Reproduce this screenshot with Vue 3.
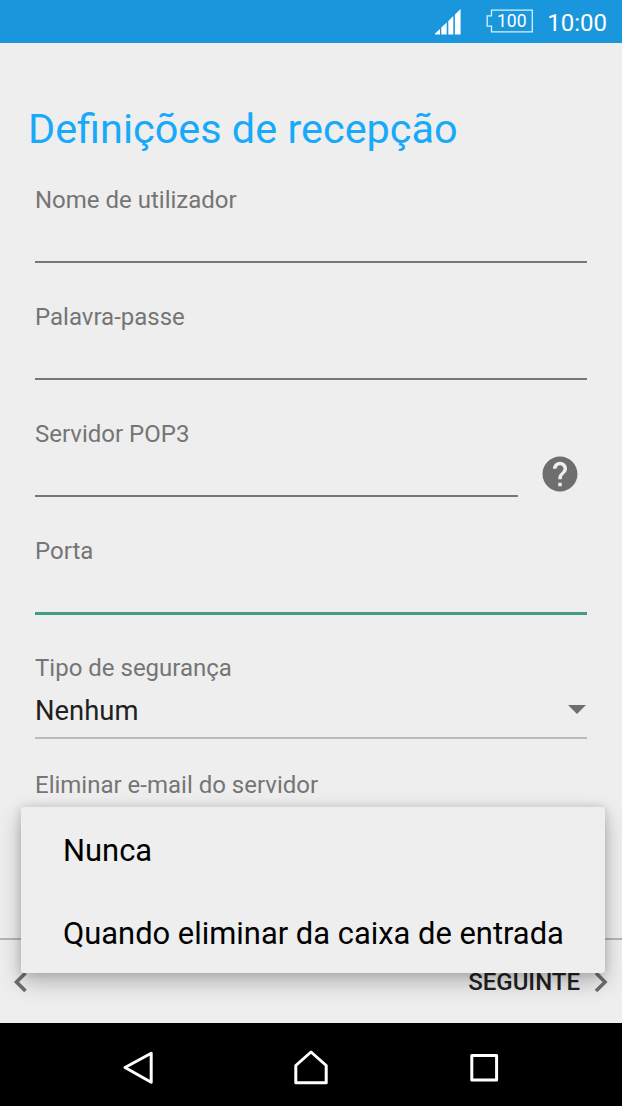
<template>
  <div class="screen">
    <!-- STATUS BAR -->
    <header class="status-bar">
      <svg class="signal" width="26" height="26" viewBox="0 0 26 26">
        <path d="M0 25.5V24.6L5 20v5.5zM6.3 25.5V18.5L11.7 13.4v12.1zM13.3 25.5V11.9L18.3 7v18.5zM19.9 25.5V5.5L25.6 0v25.5z" />
      </svg>
      <div class="battery">
        <svg width="48" height="24" viewBox="0 0 48 24">
          <path d="M5.5 1.2H46.3V22.8H5.5V17.2H1.2V6.8H5.5z" />
        </svg>
        <span>100</span>
      </div>
      <span class="clock">10:00</span>
    </header>

    <!-- FORM -->
    <main class="content">
      <h1>Definições de recepção</h1>

      <div v-for="field in fields" :key="field.id" class="field">
        <label :for="field.id">{{ field.label }}</label>
        <div class="field-row">
          <input
            :id="field.id"
            v-model="field.value"
            :type="field.type"
            :class="{ active: field.active }"
          />
          <button v-if="field.help" class="help" aria-label="Ajuda">
            <svg width="42" height="42" viewBox="0 0 24 24">
              <path d="M12 2C6.48 2 2 6.48 2 12s4.48 10 10 10 10-4.48 10-10S17.52 2 12 2zm1 17h-2v-2h2v2zm2.07-7.75l-.9.92C13.45 12.9 13 13.5 13 15h-2v-.5c0-1.1.45-2.1 1.17-2.83l1.24-1.26c.37-.36.59-.86.59-1.41 0-1.1-.9-2-2-2s-2 .9-2 2H8c0-2.21 1.79-4 4-4s4 1.79 4 4c0 .88-.36 1.68-.93 2.25z" />
            </svg>
          </button>
        </div>
      </div>

      <div class="field">
        <label>Tipo de segurança</label>
        <div class="spinner">
          <span>{{ security }}</span>
          <i class="caret"></i>
        </div>
      </div>

      <div class="field">
        <label>Eliminar e-mail do servidor</label>
      </div>
    </main>

    <!-- BOTTOM BAR -->
    <footer class="bottom-bar">
      <button aria-label="Anterior">
        <svg width="14" height="22" viewBox="0 0 14 22">
          <path d="M12.5 2L3.5 11l9 9" />
        </svg>
      </button>
      <button class="next">
        Seguinte
        <svg width="14" height="22" viewBox="0 0 14 22">
          <path d="M2 2l9 9-9 9" />
        </svg>
      </button>
    </footer>

    <!-- DROPDOWN -->
    <ul class="dropdown">
      <li v-for="option in options" :key="option">{{ option }}</li>
    </ul>

    <!-- NAVIGATION -->
    <nav class="nav-bar">
      <svg width="36" height="36" viewBox="0 0 36 36">
        <path d="M31.2 4.3V33.2L5 18.5z" />
      </svg>
      <svg width="36" height="36" viewBox="0 0 36 36">
        <path d="M18 3L33.2 16.5V33.7H2.8V16.5z" />
      </svg>
      <svg width="36" height="36" viewBox="0 0 36 36">
        <path d="M5.8 6.5h24.8v24.6H5.8z" />
      </svg>
    </nav>
  </div>
</template>

<script setup>
import { ref } from "vue";

const fields = ref([
  { id: "user", label: "Nome de utilizador", type: "text", value: "" },
  { id: "password", label: "Palavra-passe", type: "password", value: "" },
  { id: "server", label: "Servidor POP3", type: "text", value: "", help: true },
  { id: "port", label: "Porta", type: "text", value: "", active: true },
]);

const security = ref("Nenhum");

const options = ["Nunca", "Quando eliminar da caixa de entrada"];
</script>

<style>
body {
  margin: 0;
  background: #eee;
}
</style>

<style scoped>
.screen {
  position: relative;
  display: flex;
  flex-direction: column;
  width: 622px;
  height: 1106px;
  overflow: hidden;
  background: #eee;
  color: #212121;
  font-family: Roboto, sans-serif;
}

button {
  padding: 0;
  border: 0;
  background: none;
  font: inherit;
  color: inherit;
}

svg {
  display: block;
}

/* STATUS BAR */
.status-bar {
  display: flex;
  align-items: center;
  justify-content: flex-end;
  height: 43px;
  padding-right: 15px;
  box-sizing: border-box;
  background: #1a96dc;
  color: #fff;
}

.signal {
  margin: 1px 25px 0 0;
  fill: #fff;
}

.battery {
  display: grid;
  align-items: center;
  margin: 0 13px 1px 0;
}

.battery svg,
.battery span {
  grid-area: 1 / 1;
}

.battery svg {
  fill: none;
  stroke: #d3f3f8;
  stroke-width: 1.3;
}

.battery span {
  padding-left: 3px;
  font-size: 17.5px;
  line-height: 24px;
  text-align: center;
}

.clock {
  padding-top: 2px;
  font-size: 24px;
  line-height: 28px;
}

/* FORM */
.content {
  flex: 1;
  min-height: 0;
  overflow: hidden;
  padding: 61px 35px 0;
}

h1 {
  margin: 0 0 32px -7px;
  font-size: 41.4px;
  font-weight: 400;
  line-height: 50px;
  color: #18aaf9;
  white-space: nowrap;
}

.field {
  height: 117px;
}

.field label {
  display: block;
  font-size: 24px;
  line-height: 28px;
  color: #757575;
}

.field-row {
  display: flex;
}

input {
  flex: 1;
  min-width: 0;
  height: 49px;
  padding: 0;
  box-sizing: border-box;
  border: 0;
  border-bottom: 2px solid #777;
  border-radius: 0;
  outline: 0;
  background: none;
  font: 28px Roboto, sans-serif;
}

input.active {
  height: 50px;
  border-bottom: 3px solid #429a88;
}

.help {
  margin: 5px 6px 0 21px;
  height: 42px;
}

.help svg {
  fill: #6e6e6e;
}

.spinner {
  display: flex;
  align-items: center;
  justify-content: space-between;
  height: 57px;
  padding-right: 1px;
  box-sizing: border-box;
  border-bottom: 2px solid #bbb;
  font-size: 27.4px;
}

.spinner span {
  padding-top: 3px;
}

.caret {
  border: 9px solid transparent;
  border-top-color: #6e6e6e;
  border-bottom: 0;
}

/* BOTTOM BAR */
.bottom-bar {
  display: flex;
  align-items: center;
  justify-content: space-between;
  height: 85px;
  padding: 0 14px 0 13px;
  box-sizing: border-box;
  border-top: 2px solid #b5b5b5;
}

.bottom-bar svg {
  fill: none;
  stroke: #6e6e6e;
  stroke-width: 3.6;
}

.next {
  display: flex;
  align-items: center;
  gap: 14px;
  font-size: 24px;
  font-weight: 500;
  text-transform: uppercase;
}

/* DROPDOWN */
.dropdown {
  position: absolute;
  top: 807px;
  left: 21px;
  width: 584px;
  height: 166px;
  margin: 0;
  padding: 2px 0 0;
  box-sizing: border-box;
  list-style: none;
  border-radius: 3px;
  background: #eee;
  box-shadow: 0 9px 22px rgba(0, 0, 0, 0.26), 0 0 10px rgba(0, 0, 0, 0.14);
}

.dropdown li {
  padding-left: 42px;
  font-size: 30.9px;
  line-height: 83px;
  color: #000;
  white-space: nowrap;
}

/* NAVIGATION */
.nav-bar {
  display: flex;
  align-items: center;
  justify-content: center;
  gap: 137px;
  height: 83px;
  padding-top: 4px;
  box-sizing: border-box;
  background: #000;
  z-index: 1;
}

.nav-bar svg {
  fill: none;
  stroke: #fff;
  stroke-width: 3;
  stroke-linejoin: round;
}
</style>
